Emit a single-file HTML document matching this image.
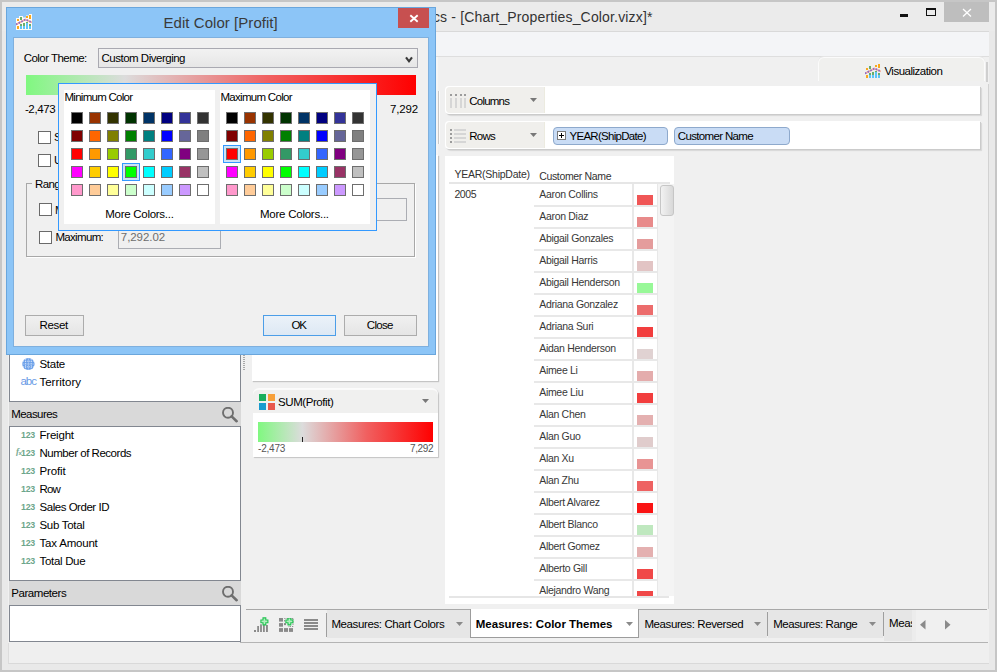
<!DOCTYPE html><html><head><meta charset="utf-8">
<style>
*{box-sizing:border-box;margin:0;padding:0}
html,body{width:997px;height:672px;overflow:hidden;background:#f0f0f0;font-family:"Liberation Sans",sans-serif;color:#000}
.a{position:absolute}
.t{position:absolute;white-space:nowrap;line-height:1;color:#000}
svg{display:block}
</style></head><body>
<div class="a" style="left:0px;top:0px;width:997px;height:672px;background:#e9e9e9;border:2px solid #c6c6c6"></div>
<div class="a" style="left:2px;top:2px;width:993px;height:29px;background:#ebebeb"></div>
<div class="t" style="left: 425.6px; top: 10px; font-size: 14px; color: rgb(51, 51, 51); letter-spacing: 0.163px;">tics - [Chart_Properties_Color.vizx]*</div>
<div class="a" style="left:900px;top:14px;width:8px;height:2.5px;background:#111"></div>
<div class="a" style="left:926px;top:8px;width:10px;height:8px;border:1.2px solid #111;border-top-width:2px"></div>
<div class="a" style="left:944px;top:2px;width:45px;height:20px;background:#bebebe"></div>
<svg class="a" style="left:962px;top:8px" width="10" height="10"><path d="M1 1 L9 8.5 M9 1 L1 8.5" stroke="#fff" stroke-width="1.3"></path></svg>
<div class="a" style="left:8px;top:31px;width:981px;height:26px;background:#f4f5f7;border-top:1px solid #d9d9d9;border-bottom:1px solid #dedede"></div>
<div class="a" style="left:8px;top:57px;width:981px;height:606px;background:#f0f0f0"></div>
<div class="a" style="left:988px;top:84px;width:1px;height:525px;background:#d2d2d2"></div>
<div class="a" style="left:818px;top:57px;width:167px;height:24px;background:#f0f0ee;border:1px solid #fbfbfb;border-bottom:none;border-radius:6px 6px 0 0;box-shadow:0 -1px 0 #e6e6e6"></div>
<div class="a" style="left:986px;top:62px;width:2px;height:20px;background:#cfcfcf"></div>
<div class="t" style="left: 884.4px; top: 66px; font-size: 11.5px; letter-spacing: -0.497px;">Visualization</div>
<svg class="a" style="left:865px;top:63px" width="16" height="16"><g fill="#f9a81c"><rect x="1" y="5" width="2" height="2"></rect><rect x="1" y="12" width="2" height="3"></rect><rect x="10" y="2" width="2" height="2"></rect><rect x="13" y="1" width="2" height="4"></rect></g><g fill="#6aae6a"><rect x="4" y="3" width="2" height="3"></rect><rect x="4" y="10" width="2" height="2"></rect><rect x="7" y="9" width="2" height="3"></rect><rect x="10" y="8" width="2" height="1"></rect><rect x="13" y="10" width="2" height="2"></rect></g><g fill="#5fc4f8"><rect x="4" y="12" width="2" height="3"></rect><rect x="7" y="12" width="2" height="3"></rect><rect x="10" y="9" width="2" height="6"></rect><rect x="13" y="12" width="2" height="3"></rect></g><path d="M0 10.5 L9.5 5.5 L16 8.5" stroke="#f4b0a0" fill="none" stroke-width="1.8"></path><path d="M0 10.5 L9.5 5.5 L16 8.5" stroke="#8a6ac8" fill="none" stroke-width="1.8" stroke-dasharray="1.5 1.5"></path></svg>
<div class="a" style="left:9px;top:60px;width:232px;height:342px;background:#fff;border:1px solid #828790"></div>
<svg class="a" style="left:22px;top:358px" width="13" height="12"><ellipse cx="6.4" cy="6" rx="6.2" ry="6" fill="#6a9fe9"></ellipse><g stroke="#e8f0fc" stroke-width="0.7" fill="none" stroke-dasharray="1.2 0.8"><path d="M1 3.2H12M0.5 6H12.5M1 8.8H12M3.6 0.8V11.2M6.4 0.5V11.5M9.2 0.8V11.2"></path></g></svg>
<div class="t" style="left: 39.4px; top: 359px; font-size: 11.5px; letter-spacing: -0.252px;">State</div>
<div class="t" style="left: 20.4px; top: 376px; font-size: 11.5px; color: rgb(106, 155, 230); letter-spacing: -0.916px;">abc</div>
<div class="t" style="left: 39.4px; top: 377px; font-size: 11.5px; letter-spacing: 0.019px;">Territory</div>
<div class="a" style="left:9px;top:402px;width:232px;height:24px;background:#d9d9d9"></div>
<div class="t" style="left: 11.2px; top: 409px; font-size: 11.5px; letter-spacing: -0.55px;">Measures</div>
<svg class="a" style="left:221px;top:407px" width="18" height="16"><circle cx="7" cy="5.8" r="5" stroke="#6e6e6e" stroke-width="1.9" fill="none"></circle><path d="M10.6 9.4 L15.6 14.2" stroke="#6e6e6e" stroke-width="2.6" stroke-linecap="round"></path></svg>
<div class="a" style="left:9px;top:426px;width:232px;height:155px;background:#fff;border:1px solid #828790"></div>
<div class="t" style="left: 21px; top: 431px; font-size: 8.8px; color: rgb(109, 166, 139); font-weight: bold; letter-spacing: -0.229px;">123</div>
<div class="t" style="left: 39.5px; top: 430px; font-size: 11.5px; letter-spacing: -0.214px;">Freight</div>
<div class="t" style="left: 21px; top: 449px; font-size: 8.8px; color: rgb(109, 166, 139); font-weight: bold; letter-spacing: -0.229px;">123</div>
<div class="t" style="left: 39.5px; top: 448px; font-size: 11.5px; letter-spacing: -0.478px;">Number of Records</div>
<div class="t" style="left: 21px; top: 467px; font-size: 8.8px; color: rgb(109, 166, 139); font-weight: bold; letter-spacing: -0.229px;">123</div>
<div class="t" style="left: 39.5px; top: 466px; font-size: 11.5px; letter-spacing: -0.124px;">Profit</div>
<div class="t" style="left: 21px; top: 485px; font-size: 8.8px; color: rgb(109, 166, 139); font-weight: bold; letter-spacing: -0.229px;">123</div>
<div class="t" style="left: 39.5px; top: 484px; font-size: 11.5px; letter-spacing: -0.839px;">Row</div>
<div class="t" style="left: 21px; top: 503px; font-size: 8.8px; color: rgb(109, 166, 139); font-weight: bold; letter-spacing: -0.229px;">123</div>
<div class="t" style="left: 39.5px; top: 502px; font-size: 11.5px; letter-spacing: -0.469px;">Sales Order ID</div>
<div class="t" style="left: 21px; top: 521px; font-size: 8.8px; color: rgb(109, 166, 139); font-weight: bold; letter-spacing: -0.229px;">123</div>
<div class="t" style="left: 39.5px; top: 520px; font-size: 11.5px; letter-spacing: -0.306px;">Sub Total</div>
<div class="t" style="left: 21px; top: 539px; font-size: 8.8px; color: rgb(109, 166, 139); font-weight: bold; letter-spacing: -0.229px;">123</div>
<div class="t" style="left: 39.5px; top: 538px; font-size: 11.5px; letter-spacing: -0.199px;">Tax Amount</div>
<div class="t" style="left: 21px; top: 557px; font-size: 8.8px; color: rgb(109, 166, 139); font-weight: bold; letter-spacing: -0.229px;">123</div>
<div class="t" style="left: 39.5px; top: 556px; font-size: 11.5px; letter-spacing: -0.31px;">Total Due</div>
<div class="t" style="left:16px;top:446px;font:italic bold 9px 'Liberation Serif',serif;color:#78aa92">f</div>
<div class="t" style="left:18.5px;top:449.5px;font-size:6px;font-weight:bold;color:#78aa92">x</div>
<div class="a" style="left:9px;top:581px;width:232px;height:24px;background:#d9d9d9"></div>
<div class="t" style="left: 11.3px; top: 588px; font-size: 11.5px; letter-spacing: -0.454px;">Parameters</div>
<svg class="a" style="left:221px;top:586px" width="18" height="16"><circle cx="7" cy="5.8" r="5" stroke="#6e6e6e" stroke-width="1.9" fill="none"></circle><path d="M10.6 9.4 L15.6 14.2" stroke="#6e6e6e" stroke-width="2.6" stroke-linecap="round"></path></svg>
<div class="a" style="left:9px;top:605px;width:232px;height:37px;background:#fff;border:1px solid #828790"></div>
<div class="a" style="left:243px;top:355px;width:2px;height:16px;background:repeating-linear-gradient(#a8a8a8 0 1px,transparent 1px 2px)"></div>
<div class="a" style="left:8px;top:643px;width:981px;height:21px;background:#efefef;border-left:1px solid #dcdcdc;border-bottom:1px solid #d9d9d9"></div>
<div class="a" style="left:252px;top:155px;width:186px;height:226px;background:#fff;box-shadow:1px 1px 1px #c4c4c4"></div>
<div class="a" style="left:436px;top:57px;width:2px;height:98px;background:#f6f6f6"></div>
<div class="a" style="left:253px;top:388px;width:185px;height:69px;background:#fff;box-shadow:1px 1px 1px #c4c4c4;border-top:1px solid #fbfbfb;border-radius:6px 6px 0 0"></div>
<div class="a" style="left:253px;top:389px;width:185px;height:24px;background:#f0f0ef;border-radius:6px 6px 0 0;border-top:1px solid #fafafa"></div>
<svg class="a" style="left:259px;top:394px" width="16" height="16"><rect x="0" y="0" width="7" height="7" fill="#1aaf5d"></rect><rect x="9" y="0" width="7" height="7" fill="#f7a03a"></rect><rect x="0" y="9" width="7" height="7" fill="#1a9bcf"></rect><rect x="9" y="9" width="7" height="7" fill="#e8574c"></rect></svg>
<div class="t" style="left: 278.1px; top: 397px; font-size: 11.5px; letter-spacing: -0.442px;">SUM(Profit)</div>
<svg class="a" style="left:422px;top:399px" width="7" height="4"><path d="M0 0H7L3.5 4Z" fill="#787878"></path></svg>
<div class="a" style="left:258px;top:422px;width:175px;height:20px;background:linear-gradient(to right,#80f880 0%,#dcdcdc 25.3%,#f06060 62%,#ff0000 100%)"></div>
<div class="a" style="left:302px;top:437px;width:1px;height:5px;background:#222"></div>
<div class="t" style="left: 258px; top: 444px; font-size: 10px; color: rgb(85, 85, 85); letter-spacing: -0.193px;">-2,473</div>
<div class="t" style="left: 410px; top: 444px; font-size: 10px; color: rgb(85, 85, 85); letter-spacing: -0.386px;">7,292</div>
<div class="a" style="left:445px;top:86px;width:535px;height:28px;background:#fff;border-radius:4px 0 0 4px;box-shadow:1px 1px 0 #cbcbcb, 2px 2px 1px #d8d8d8"></div>
<div class="a" style="left:446px;top:87px;width:99px;height:26px;background:#f0efec;border-radius:4px 0 0 4px;border-right:1px solid #ecebe0"></div>
<div class="t" style="left: 469.3px; top: 96px; font-size: 11.5px; letter-spacing: -0.799px;">Columns</div>
<svg class="a" style="left:530px;top:98px" width="7" height="4"><path d="M0 0H7L3.5 4Z" fill="#787878"></path></svg>
<svg class="a" style="left:450px;top:94px" width="16" height="14"><g fill="#9c9c9c"><rect x="0" y="0" width="2" height="2"></rect><rect x="5" y="0" width="2" height="2"></rect><rect x="10" y="0" width="2" height="2"></rect><rect x="14" y="0" width="2" height="2"></rect></g><g fill="#d6d6d6"><rect x="0" y="4" width="2" height="10"></rect><rect x="5" y="4" width="2" height="10"></rect><rect x="10" y="4" width="2" height="10"></rect><rect x="14" y="4" width="2" height="10"></rect></g></svg>
<div class="a" style="left:445px;top:121px;width:535px;height:28px;background:#fff;border-radius:4px 0 0 4px;box-shadow:1px 1px 0 #cbcbcb, 2px 2px 1px #d8d8d8"></div>
<div class="a" style="left:446px;top:122px;width:99px;height:26px;background:#f0efec;border-radius:4px 0 0 4px;border-right:1px solid #ecebe0"></div>
<div class="t" style="left: 469.3px; top: 131px; font-size: 11.5px; letter-spacing: -0.766px;">Rows</div>
<svg class="a" style="left:530px;top:133px" width="7" height="4"><path d="M0 0H7L3.5 4Z" fill="#787878"></path></svg>
<svg class="a" style="left:450px;top:129px" width="16" height="14"><g fill="#9c9c9c"><rect x="0" y="0" width="2" height="2"></rect><rect x="0" y="4" width="2" height="2"></rect><rect x="0" y="8" width="2" height="2"></rect><rect x="0" y="12" width="2" height="2"></rect></g><g fill="#d6d6d6"><rect x="4" y="0" width="12" height="2"></rect><rect x="4" y="4" width="12" height="2"></rect><rect x="4" y="8" width="12" height="2"></rect><rect x="4" y="12" width="12" height="2"></rect></g></svg>
<div class="a" style="left:553px;top:127px;width:115px;height:18px;background:#c9dcf5;border:1px solid #8ea9cc;border-radius:4px"></div>
<div class="a" style="left:557px;top:131px;width:9px;height:9px;background:#fff;border:1px solid #7a7a7a"></div>
<div class="a" style="left:559px;top:135px;width:5px;height:1px;background:#000"></div>
<div class="a" style="left:561px;top:133px;width:1px;height:5px;background:#000"></div>
<div class="t" style="left: 569.5px; top: 131px; font-size: 11.5px; letter-spacing: -0.714px;">YEAR(ShipDate)</div>
<div class="a" style="left:674px;top:127px;width:116px;height:18px;background:#c9dcf5;border:1px solid #8ea9cc;border-radius:4px"></div>
<div class="t" style="left: 677.8px; top: 131px; font-size: 11.5px; letter-spacing: -0.655px;">Customer Name</div>
<div class="a" style="left:438px;top:91px;width:1px;height:53px;background:#c8c8c8"></div>
<div class="a" style="left:439px;top:91px;width:1px;height:53px;background:#fafafa"></div>
<div class="a" style="left:445px;top:156px;width:229px;height:448px;background:#fff"></div>
<div class="t" style="left: 454.4px; top: 169px; font-size: 10.5px; color: rgb(51, 51, 51); letter-spacing: -0.242px;">YEAR(ShipDate)</div>
<div class="t" style="left: 539.2px; top: 171px; font-size: 10.5px; color: rgb(51, 51, 51); letter-spacing: -0.335px;">Customer Name</div>
<div class="a" style="left:449px;top:182px;width:221px;height:2px;background:#e6e6e6"></div>
<div class="t" style="left: 454.4px; top: 189px; font-size: 10.5px; color: rgb(51, 51, 51); letter-spacing: -0.39px;">2005</div>
<div class="a" style="left:632px;top:184px;width:2px;height:412px;background:#e8e8e8"></div>
<div class="a" style="left:449px;top:596px;width:220px;height:2px;background:#e6e6e6"></div>
<div class="a" style="left:657px;top:184px;width:1px;height:412px;background:#e8e8e8"></div>
<div class="a" style="left:658px;top:184px;width:16px;height:412px;background:#f4f4f4"></div>
<div class="a" style="left:660px;top:185px;width:14px;height:31px;background:linear-gradient(to right,#f2f2f2,#d8d8d8);border:1px solid #c6c6c6;border-radius:3px"></div>
<div class="t" style="left:539.2px;top:189px;font-size:10.5px;color:#383838;letter-spacing:-0.3px">Aaron Collins</div>
<div class="a" style="left:534px;top:205px;width:123px;height:2px;background:#e8e8e8"></div>
<div class="a" style="left:637px;top:195px;width:16px;height:10px;background:#f05656"></div>
<div class="t" style="left:539.2px;top:211px;font-size:10.5px;color:#383838;letter-spacing:-0.3px">Aaron Diaz</div>
<div class="a" style="left:534px;top:227px;width:123px;height:2px;background:#e8e8e8"></div>
<div class="a" style="left:637px;top:217px;width:16px;height:10px;background:#e88a8a"></div>
<div class="t" style="left:539.2px;top:233px;font-size:10.5px;color:#383838;letter-spacing:-0.3px">Abigail Gonzales</div>
<div class="a" style="left:534px;top:249px;width:123px;height:2px;background:#e8e8e8"></div>
<div class="a" style="left:637px;top:239px;width:16px;height:10px;background:#e49c9c"></div>
<div class="t" style="left:539.2px;top:255px;font-size:10.5px;color:#383838;letter-spacing:-0.3px">Abigail Harris</div>
<div class="a" style="left:534px;top:271px;width:123px;height:2px;background:#e8e8e8"></div>
<div class="a" style="left:637px;top:261px;width:16px;height:10px;background:#e2c4c4"></div>
<div class="t" style="left:539.2px;top:277px;font-size:10.5px;color:#383838;letter-spacing:-0.3px">Abigail Henderson</div>
<div class="a" style="left:534px;top:293px;width:123px;height:2px;background:#e8e8e8"></div>
<div class="a" style="left:637px;top:283px;width:16px;height:10px;background:#98f898"></div>
<div class="t" style="left:539.2px;top:299px;font-size:10.5px;color:#383838;letter-spacing:-0.3px">Adriana Gonzalez</div>
<div class="a" style="left:534px;top:315px;width:123px;height:2px;background:#e8e8e8"></div>
<div class="a" style="left:637px;top:305px;width:16px;height:10px;background:#ec6c6c"></div>
<div class="t" style="left:539.2px;top:321px;font-size:10.5px;color:#383838;letter-spacing:-0.3px">Adriana Suri</div>
<div class="a" style="left:534px;top:337px;width:123px;height:2px;background:#e8e8e8"></div>
<div class="a" style="left:637px;top:327px;width:16px;height:10px;background:#f23e3e"></div>
<div class="t" style="left:539.2px;top:343px;font-size:10.5px;color:#383838;letter-spacing:-0.3px">Aidan Henderson</div>
<div class="a" style="left:534px;top:359px;width:123px;height:2px;background:#e8e8e8"></div>
<div class="a" style="left:637px;top:349px;width:16px;height:10px;background:#e0d2d2"></div>
<div class="t" style="left:539.2px;top:365px;font-size:10.5px;color:#383838;letter-spacing:-0.3px">Aimee Li</div>
<div class="a" style="left:534px;top:381px;width:123px;height:2px;background:#e8e8e8"></div>
<div class="a" style="left:637px;top:371px;width:16px;height:10px;background:#e4acac"></div>
<div class="t" style="left:539.2px;top:387px;font-size:10.5px;color:#383838;letter-spacing:-0.3px">Aimee Liu</div>
<div class="a" style="left:534px;top:403px;width:123px;height:2px;background:#e8e8e8"></div>
<div class="a" style="left:637px;top:393px;width:16px;height:10px;background:#f23e3e"></div>
<div class="t" style="left:539.2px;top:409px;font-size:10.5px;color:#383838;letter-spacing:-0.3px">Alan Chen</div>
<div class="a" style="left:534px;top:425px;width:123px;height:2px;background:#e8e8e8"></div>
<div class="a" style="left:637px;top:415px;width:16px;height:10px;background:#e4b0b0"></div>
<div class="t" style="left:539.2px;top:431px;font-size:10.5px;color:#383838;letter-spacing:-0.3px">Alan Guo</div>
<div class="a" style="left:534px;top:447px;width:123px;height:2px;background:#e8e8e8"></div>
<div class="a" style="left:637px;top:437px;width:16px;height:10px;background:#e0cccc"></div>
<div class="t" style="left:539.2px;top:453px;font-size:10.5px;color:#383838;letter-spacing:-0.3px">Alan Xu</div>
<div class="a" style="left:534px;top:469px;width:123px;height:2px;background:#e8e8e8"></div>
<div class="a" style="left:637px;top:459px;width:16px;height:10px;background:#e89494"></div>
<div class="t" style="left:539.2px;top:475px;font-size:10.5px;color:#383838;letter-spacing:-0.3px">Alan Zhu</div>
<div class="a" style="left:534px;top:491px;width:123px;height:2px;background:#e8e8e8"></div>
<div class="a" style="left:637px;top:481px;width:16px;height:10px;background:#ee6262"></div>
<div class="t" style="left:539.2px;top:497px;font-size:10.5px;color:#383838;letter-spacing:-0.3px">Albert Alvarez</div>
<div class="a" style="left:534px;top:513px;width:123px;height:2px;background:#e8e8e8"></div>
<div class="a" style="left:637px;top:503px;width:16px;height:10px;background:#fa1414"></div>
<div class="t" style="left:539.2px;top:519px;font-size:10.5px;color:#383838;letter-spacing:-0.3px">Albert Blanco</div>
<div class="a" style="left:534px;top:535px;width:123px;height:2px;background:#e8e8e8"></div>
<div class="a" style="left:637px;top:525px;width:16px;height:10px;background:#bfe8bf"></div>
<div class="t" style="left:539.2px;top:541px;font-size:10.5px;color:#383838;letter-spacing:-0.3px">Albert Gomez</div>
<div class="a" style="left:534px;top:557px;width:123px;height:2px;background:#e8e8e8"></div>
<div class="a" style="left:637px;top:547px;width:16px;height:10px;background:#e4b0b0"></div>
<div class="t" style="left:539.2px;top:563px;font-size:10.5px;color:#383838;letter-spacing:-0.3px">Alberto Gill</div>
<div class="a" style="left:534px;top:579px;width:123px;height:2px;background:#e8e8e8"></div>
<div class="a" style="left:637px;top:569px;width:16px;height:10px;background:#f04848"></div>
<div class="t" style="left:539.2px;top:585px;font-size:10.5px;color:#383838;letter-spacing:-0.3px">Alejandro Wang</div>
<div class="a" style="left:637px;top:591px;width:16px;height:5px;background:#f04848"></div>
<div class="a" style="left:246px;top:609px;width:741px;height:33px;background:#f0f0f0;border-top:1px solid #a8a8a8"></div>
<div class="a" style="left:240px;top:642px;width:748px;height:1px;background:#b4b4b4"></div>
<svg class="a" style="left:254px;top:617px" width="16" height="16"><g fill="#8a8a8a"><rect x="0" y="13" width="2" height="2"></rect><rect x="3.2" y="9" width="1.8" height="6"></rect><rect x="6.1" y="7.3" width="1.8" height="7.7"></rect><rect x="9" y="8" width="1.8" height="7"></rect><rect x="12" y="8" width="1.9" height="7"></rect></g><path d="M9.0 0.9000000000000004H11.8V3.0000000000000004H13.9V5.800000000000001H11.8V7.9H9.0V5.800000000000001H6.9V3.0000000000000004H9.0Z" fill="#b4eec0" stroke="#1fc24f" stroke-width="1.1"></path></svg>
<svg class="a" style="left:279px;top:618px" width="16" height="16"><g fill="#8a8a8a"><rect x="0" y="0" width="4" height="3.6"></rect><rect x="0" y="5.1" width="4" height="3.6"></rect><rect x="0" y="10.1" width="4" height="3.8"></rect><rect x="5" y="10.1" width="4" height="3.8"></rect><rect x="10" y="10.1" width="4" height="3.8"></rect><rect x="5" y="5.1" width="2" height="2"></rect></g><path d="M5.5 3.5V0.5H14M14 0.5V8.5H9" stroke="#8a8a8a" stroke-width="0.9" fill="none" stroke-dasharray="1.5 1"></path><path d="M9.0 -0.10000000000000009H11.8V2.0H13.9V4.8H11.8V6.9H9.0V4.8H6.9V2.0H9.0Z" fill="#b4eec0" stroke="#1fc24f" stroke-width="1.1"></path></svg>
<svg class="a" style="left:304px;top:619px" width="15" height="12"><g fill="#8a8a8a"><rect x="0" y="0" width="14" height="2"></rect><rect x="0" y="3" width="14" height="2"></rect><rect x="0" y="6" width="14" height="2"></rect><rect x="0" y="9" width="14" height="2"></rect></g></svg>
<div class="a" style="left:326px;top:613px;width:1px;height:24px;background:#9e9e9e"></div>
<div class="a" style="left:327px;top:610px;width:144px;height:28px;background:#e6e6e6"></div>
<div class="t" style="left: 331.4px; top: 619px; font-size: 11.5px; letter-spacing: -0.384px;">Measures: Chart Colors</div>
<svg class="a" style="left:456px;top:622px" width="7" height="4"><path d="M0 0H7L3.5 4Z" fill="#8a8a8a"></path></svg>
<div class="a" style="left:470px;top:609px;width:169px;height:29px;background:#fff;border:1px solid #9c9c9c;border-top:none"></div>
<div class="t" style="left: 475.8px; top: 619px; font-size: 11.5px; font-weight: bold; letter-spacing: -0.003px;">Measures: Color Themes</div>
<svg class="a" style="left:626px;top:622px" width="7" height="4"><path d="M0 0H7L3.5 4Z" fill="#8a8a8a"></path></svg>
<div class="a" style="left:639px;top:610px;width:128px;height:28px;background:#e6e6e6"></div>
<div class="t" style="left: 644.4px; top: 619px; font-size: 11.5px; letter-spacing: -0.401px;">Measures: Reversed</div>
<svg class="a" style="left:754px;top:622px" width="7" height="4"><path d="M0 0H7L3.5 4Z" fill="#8a8a8a"></path></svg>
<div class="a" style="left:767px;top:612px;width:1px;height:24px;background:#9e9e9e"></div>
<div class="a" style="left:768px;top:610px;width:115px;height:28px;background:#e6e6e6"></div>
<div class="t" style="left: 773.2px; top: 619px; font-size: 11.5px; letter-spacing: -0.445px;">Measures: Range</div>
<svg class="a" style="left:869px;top:622px" width="7" height="4"><path d="M0 0H7L3.5 4Z" fill="#8a8a8a"></path></svg>
<div class="a" style="left:883px;top:612px;width:1px;height:24px;background:#9e9e9e"></div>
<div class="a" style="left:884px;top:610px;width:32px;height:31px;background:#e6e6e6;overflow:hidden"><div class="t" style="left:5px;top:8.3px;font-size:11.5px;letter-spacing:-0.4px">Measures</div></div>
<div class="a" style="left:912px;top:610px;width:4px;height:31px;background:#ececec"></div>
<div class="a" style="left:916px;top:610px;width:71px;height:32px;background:#f0f0f0"></div>
<svg class="a" style="left:920px;top:620px" width="6" height="10"><path d="M5.5 0V9.5L0 4.75Z" fill="#8a8a8a"></path></svg>
<svg class="a" style="left:945px;top:620px" width="6" height="10"><path d="M0 0V9.5L5.5 4.75Z" fill="#8a8a8a"></path></svg>
<div class="a" style="left:6px;top:7px;width:430px;height:348px;background:#8cc5f7;border:1px solid #6aa6dc"></div>
<svg class="a" style="left:16px;top:14px" width="16" height="16"><path d="M0 4H3V2H7V3.5H10V1.5H13V0H16V16H0Z" fill="#fdfbf7"></path><g fill="#f9a81c"><rect x="1" y="5" width="2" height="2"></rect><rect x="1" y="12" width="2" height="3"></rect><rect x="10" y="2" width="2" height="2"></rect><rect x="13" y="1" width="2" height="4"></rect></g><g fill="#6aae6a"><rect x="4" y="3" width="2" height="3"></rect><rect x="4" y="10" width="2" height="2"></rect><rect x="7" y="9" width="2" height="3"></rect><rect x="10" y="8" width="2" height="1"></rect><rect x="13" y="10" width="2" height="2"></rect></g><g fill="#5fc4f8"><rect x="4" y="12" width="2" height="3"></rect><rect x="7" y="12" width="2" height="3"></rect><rect x="10" y="9" width="2" height="6"></rect><rect x="13" y="12" width="2" height="3"></rect></g><path d="M0 10.5 L9.5 5.5 L16 8.5" stroke="#f4b0a0" fill="none" stroke-width="1.8"></path><path d="M0 10.5 L9.5 5.5 L16 8.5" stroke="#8a6ac8" fill="none" stroke-width="1.8" stroke-dasharray="1.5 1.5"></path></svg>
<div class="t" style="left: 163.5px; top: 15px; font-size: 15px; color: rgb(58, 58, 58); letter-spacing: 0.049px;">Edit Color [Profit]</div>
<div class="a" style="left:398px;top:8px;width:31px;height:20px;background:#c75050"></div>
<svg class="a" style="left:409px;top:14px" width="10" height="9"><path d="M1.3 1.2 L8.7 7.8 M8.7 1.2 L1.3 7.8" stroke="#fff" stroke-width="1.9"></path></svg>
<div class="a" style="left:13px;top:37px;width:416px;height:310px;background:#f0f0f0;border:1px solid #7fb0de"></div>
<div class="t" style="left: 23.7px; top: 53px; font-size: 11.5px; letter-spacing: -0.531px;">Color Theme:</div>
<div class="a" style="left:98px;top:48px;width:320px;height:20px;background:linear-gradient(#f2f2f2,#e6e6e6);border:1px solid #a9a9b1"></div>
<div class="t" style="left: 101.5px; top: 53px; font-size: 11.5px; letter-spacing: -0.494px;">Custom Diverging</div>
<svg class="a" style="left:404.5px;top:55.5px" width="9" height="8"><path d="M1 1.3 L4 5.3 L7 1.3" stroke="#3a3a3a" stroke-width="2.1" fill="none"></path></svg>
<div class="a" style="left:26px;top:75px;width:390px;height:20px;background:linear-gradient(to right,#80f880 0%,#dcdcdc 25.3%,#f06060 62%,#ff0000 100%)"></div>
<div class="t" style="left: 24.9px; top: 104px; font-size: 11.5px; letter-spacing: -0.352px;">-2,473</div>
<div class="t" style="left: 390px; top: 104px; font-size: 11.5px; letter-spacing: -0.176px;">7,292</div>
<div class="a" style="left:38px;top:131px;width:13px;height:13px;background:#fff;border:1px solid #6a6a6a"></div>
<div class="t" style="left:54px;top:132px;font-size:11.5px;">S</div>
<div class="a" style="left:38px;top:154px;width:13px;height:13px;background:#fff;border:1px solid #6a6a6a"></div>
<div class="t" style="left:54px;top:155px;font-size:11.5px;">U</div>
<div class="a" style="left:26px;top:183px;width:389px;height:74px;border:1px solid #a8a8a8;box-shadow:1px 1px 0 #fff"></div>
<div class="a" style="left:32px;top:176px;width:36px;height:12px;background:#f0f0f0"></div>
<div class="t" style="left: 35px; top: 179px; font-size: 11.5px; letter-spacing: -0.578px;">Range</div>
<div class="a" style="left:39px;top:203px;width:13px;height:13px;background:#fff;border:1px solid #6a6a6a"></div>
<div class="t" style="left:55px;top:205px;font-size:11.5px;">M</div>
<div class="a" style="left:39px;top:231px;width:13px;height:13px;background:#fff;border:1px solid #6a6a6a"></div>
<div class="t" style="left: 55.4px; top: 232px; font-size: 11.5px; letter-spacing: -0.666px;">Maximum:</div>
<div class="a" style="left:118px;top:198px;width:289px;height:23px;background:#f0f0f0;border:1px solid #abadb3"></div>
<div class="a" style="left:118px;top:228px;width:103px;height:21px;background:#f0f0f0;border:1px solid #abadb3"></div>
<div class="t" style="left: 120.8px; top: 232px; font-size: 11.5px; color: rgb(109, 109, 109); letter-spacing: -0.058px;">7,292.02</div>
<div class="a" style="left:25px;top:315px;width:59px;height:21px;background:linear-gradient(#f0f0f0,#e5e5e5);border:1px solid #acacac"></div>
<div class="t" style="left: 39.4px; top: 320px; font-size: 11.5px; letter-spacing: -0.289px;">Reset</div>
<div class="a" style="left:263px;top:315px;width:73px;height:21px;background:linear-gradient(#ebf2f9,#dde8f4);border:1px solid #4c9ee8"></div>
<div class="t" style="left: 291.5px; top: 320px; font-size: 11.5px; letter-spacing: -1.112px;">OK</div>
<div class="a" style="left:344px;top:315px;width:73px;height:21px;background:linear-gradient(#f0f0f0,#e5e5e5);border:1px solid #acacac"></div>
<div class="t" style="left: 366.85px; top: 320px; font-size: 11.5px; letter-spacing: -0.741px;">Close</div>
<div class="a" style="left:58px;top:83px;width:319px;height:148px;background:#f0f0f0;border:1px solid #3399ff"></div>
<div class="a" style="left:64px;top:90px;width:151px;height:134px;background:#fff"></div>
<div class="t" style="left: 64.5px; top: 92px; font-size: 11.5px; letter-spacing: -0.733px;">Minimum Color</div>
<div class="a" style="left:71px;top:112px;width:12px;height:12px;background:#000000;border:1px solid #6e6e6e"></div>
<div class="a" style="left:89px;top:112px;width:12px;height:12px;background:#993300;border:1px solid #6e6e6e"></div>
<div class="a" style="left:107px;top:112px;width:12px;height:12px;background:#333300;border:1px solid #6e6e6e"></div>
<div class="a" style="left:125px;top:112px;width:12px;height:12px;background:#003300;border:1px solid #6e6e6e"></div>
<div class="a" style="left:143px;top:112px;width:12px;height:12px;background:#003366;border:1px solid #6e6e6e"></div>
<div class="a" style="left:161px;top:112px;width:12px;height:12px;background:#000080;border:1px solid #6e6e6e"></div>
<div class="a" style="left:179px;top:112px;width:12px;height:12px;background:#333399;border:1px solid #6e6e6e"></div>
<div class="a" style="left:197px;top:112px;width:12px;height:12px;background:#333333;border:1px solid #6e6e6e"></div>
<div class="a" style="left:71px;top:130px;width:12px;height:12px;background:#800000;border:1px solid #6e6e6e"></div>
<div class="a" style="left:89px;top:130px;width:12px;height:12px;background:#FF6600;border:1px solid #6e6e6e"></div>
<div class="a" style="left:107px;top:130px;width:12px;height:12px;background:#808000;border:1px solid #6e6e6e"></div>
<div class="a" style="left:125px;top:130px;width:12px;height:12px;background:#008000;border:1px solid #6e6e6e"></div>
<div class="a" style="left:143px;top:130px;width:12px;height:12px;background:#008080;border:1px solid #6e6e6e"></div>
<div class="a" style="left:161px;top:130px;width:12px;height:12px;background:#0000FF;border:1px solid #6e6e6e"></div>
<div class="a" style="left:179px;top:130px;width:12px;height:12px;background:#666699;border:1px solid #6e6e6e"></div>
<div class="a" style="left:197px;top:130px;width:12px;height:12px;background:#808080;border:1px solid #6e6e6e"></div>
<div class="a" style="left:71px;top:148px;width:12px;height:12px;background:#FF0000;border:1px solid #6e6e6e"></div>
<div class="a" style="left:89px;top:148px;width:12px;height:12px;background:#FF9900;border:1px solid #6e6e6e"></div>
<div class="a" style="left:107px;top:148px;width:12px;height:12px;background:#99CC00;border:1px solid #6e6e6e"></div>
<div class="a" style="left:125px;top:148px;width:12px;height:12px;background:#339966;border:1px solid #6e6e6e"></div>
<div class="a" style="left:143px;top:148px;width:12px;height:12px;background:#33CCCC;border:1px solid #6e6e6e"></div>
<div class="a" style="left:161px;top:148px;width:12px;height:12px;background:#3366FF;border:1px solid #6e6e6e"></div>
<div class="a" style="left:179px;top:148px;width:12px;height:12px;background:#800080;border:1px solid #6e6e6e"></div>
<div class="a" style="left:197px;top:148px;width:12px;height:12px;background:#969696;border:1px solid #6e6e6e"></div>
<div class="a" style="left:71px;top:166px;width:12px;height:12px;background:#FF00FF;border:1px solid #6e6e6e"></div>
<div class="a" style="left:89px;top:166px;width:12px;height:12px;background:#FFCC00;border:1px solid #6e6e6e"></div>
<div class="a" style="left:107px;top:166px;width:12px;height:12px;background:#FFFF00;border:1px solid #6e6e6e"></div>
<div class="a" style="left:122px;top:163px;width:18px;height:18px;background:#cce4f7;border:1px solid #3399ff"></div>
<div class="a" style="left:125px;top:166px;width:12px;height:12px;background:#00FF00;border:1px solid #6e6e6e"></div>
<div class="a" style="left:143px;top:166px;width:12px;height:12px;background:#00FFFF;border:1px solid #6e6e6e"></div>
<div class="a" style="left:161px;top:166px;width:12px;height:12px;background:#00CCFF;border:1px solid #6e6e6e"></div>
<div class="a" style="left:179px;top:166px;width:12px;height:12px;background:#993366;border:1px solid #6e6e6e"></div>
<div class="a" style="left:197px;top:166px;width:12px;height:12px;background:#C0C0C0;border:1px solid #6e6e6e"></div>
<div class="a" style="left:71px;top:184px;width:12px;height:12px;background:#FF99CC;border:1px solid #6e6e6e"></div>
<div class="a" style="left:89px;top:184px;width:12px;height:12px;background:#FFCC99;border:1px solid #6e6e6e"></div>
<div class="a" style="left:107px;top:184px;width:12px;height:12px;background:#FFFF99;border:1px solid #6e6e6e"></div>
<div class="a" style="left:125px;top:184px;width:12px;height:12px;background:#CCFFCC;border:1px solid #6e6e6e"></div>
<div class="a" style="left:143px;top:184px;width:12px;height:12px;background:#CCFFFF;border:1px solid #6e6e6e"></div>
<div class="a" style="left:161px;top:184px;width:12px;height:12px;background:#99CCFF;border:1px solid #6e6e6e"></div>
<div class="a" style="left:179px;top:184px;width:12px;height:12px;background:#CC99FF;border:1px solid #6e6e6e"></div>
<div class="a" style="left:197px;top:184px;width:12px;height:12px;background:#FFFFFF;border:1px solid #6e6e6e"></div>
<div class="t" style="left: 105.3px; top: 209px; font-size: 11.5px; letter-spacing: -0.28px;">More Colors...</div>
<div class="a" style="left:220px;top:90px;width:150px;height:134px;background:#fff"></div>
<div class="t" style="left: 220.5px; top: 92px; font-size: 11.5px; letter-spacing: -0.709px;">Maximum Color</div>
<div class="a" style="left:226px;top:112px;width:12px;height:12px;background:#000000;border:1px solid #6e6e6e"></div>
<div class="a" style="left:244px;top:112px;width:12px;height:12px;background:#993300;border:1px solid #6e6e6e"></div>
<div class="a" style="left:262px;top:112px;width:12px;height:12px;background:#333300;border:1px solid #6e6e6e"></div>
<div class="a" style="left:280px;top:112px;width:12px;height:12px;background:#003300;border:1px solid #6e6e6e"></div>
<div class="a" style="left:298px;top:112px;width:12px;height:12px;background:#003366;border:1px solid #6e6e6e"></div>
<div class="a" style="left:316px;top:112px;width:12px;height:12px;background:#000080;border:1px solid #6e6e6e"></div>
<div class="a" style="left:334px;top:112px;width:12px;height:12px;background:#333399;border:1px solid #6e6e6e"></div>
<div class="a" style="left:352px;top:112px;width:12px;height:12px;background:#333333;border:1px solid #6e6e6e"></div>
<div class="a" style="left:226px;top:130px;width:12px;height:12px;background:#800000;border:1px solid #6e6e6e"></div>
<div class="a" style="left:244px;top:130px;width:12px;height:12px;background:#FF6600;border:1px solid #6e6e6e"></div>
<div class="a" style="left:262px;top:130px;width:12px;height:12px;background:#808000;border:1px solid #6e6e6e"></div>
<div class="a" style="left:280px;top:130px;width:12px;height:12px;background:#008000;border:1px solid #6e6e6e"></div>
<div class="a" style="left:298px;top:130px;width:12px;height:12px;background:#008080;border:1px solid #6e6e6e"></div>
<div class="a" style="left:316px;top:130px;width:12px;height:12px;background:#0000FF;border:1px solid #6e6e6e"></div>
<div class="a" style="left:334px;top:130px;width:12px;height:12px;background:#666699;border:1px solid #6e6e6e"></div>
<div class="a" style="left:352px;top:130px;width:12px;height:12px;background:#808080;border:1px solid #6e6e6e"></div>
<div class="a" style="left:223px;top:145px;width:18px;height:18px;background:#cce4f7;border:1px solid #3399ff"></div>
<div class="a" style="left:226px;top:148px;width:12px;height:12px;background:#FF0000;border:1px solid #6e6e6e"></div>
<div class="a" style="left:244px;top:148px;width:12px;height:12px;background:#FF9900;border:1px solid #6e6e6e"></div>
<div class="a" style="left:262px;top:148px;width:12px;height:12px;background:#99CC00;border:1px solid #6e6e6e"></div>
<div class="a" style="left:280px;top:148px;width:12px;height:12px;background:#339966;border:1px solid #6e6e6e"></div>
<div class="a" style="left:298px;top:148px;width:12px;height:12px;background:#33CCCC;border:1px solid #6e6e6e"></div>
<div class="a" style="left:316px;top:148px;width:12px;height:12px;background:#3366FF;border:1px solid #6e6e6e"></div>
<div class="a" style="left:334px;top:148px;width:12px;height:12px;background:#800080;border:1px solid #6e6e6e"></div>
<div class="a" style="left:352px;top:148px;width:12px;height:12px;background:#969696;border:1px solid #6e6e6e"></div>
<div class="a" style="left:226px;top:166px;width:12px;height:12px;background:#FF00FF;border:1px solid #6e6e6e"></div>
<div class="a" style="left:244px;top:166px;width:12px;height:12px;background:#FFCC00;border:1px solid #6e6e6e"></div>
<div class="a" style="left:262px;top:166px;width:12px;height:12px;background:#FFFF00;border:1px solid #6e6e6e"></div>
<div class="a" style="left:280px;top:166px;width:12px;height:12px;background:#00FF00;border:1px solid #6e6e6e"></div>
<div class="a" style="left:298px;top:166px;width:12px;height:12px;background:#00FFFF;border:1px solid #6e6e6e"></div>
<div class="a" style="left:316px;top:166px;width:12px;height:12px;background:#00CCFF;border:1px solid #6e6e6e"></div>
<div class="a" style="left:334px;top:166px;width:12px;height:12px;background:#993366;border:1px solid #6e6e6e"></div>
<div class="a" style="left:352px;top:166px;width:12px;height:12px;background:#C0C0C0;border:1px solid #6e6e6e"></div>
<div class="a" style="left:226px;top:184px;width:12px;height:12px;background:#FF99CC;border:1px solid #6e6e6e"></div>
<div class="a" style="left:244px;top:184px;width:12px;height:12px;background:#FFCC99;border:1px solid #6e6e6e"></div>
<div class="a" style="left:262px;top:184px;width:12px;height:12px;background:#FFFF99;border:1px solid #6e6e6e"></div>
<div class="a" style="left:280px;top:184px;width:12px;height:12px;background:#CCFFCC;border:1px solid #6e6e6e"></div>
<div class="a" style="left:298px;top:184px;width:12px;height:12px;background:#CCFFFF;border:1px solid #6e6e6e"></div>
<div class="a" style="left:316px;top:184px;width:12px;height:12px;background:#99CCFF;border:1px solid #6e6e6e"></div>
<div class="a" style="left:334px;top:184px;width:12px;height:12px;background:#CC99FF;border:1px solid #6e6e6e"></div>
<div class="a" style="left:352px;top:184px;width:12px;height:12px;background:#FFFFFF;border:1px solid #6e6e6e"></div>
<div class="t" style="left: 260px; top: 209px; font-size: 11.5px; letter-spacing: -0.244px;">More Colors...</div>

</body></html>
